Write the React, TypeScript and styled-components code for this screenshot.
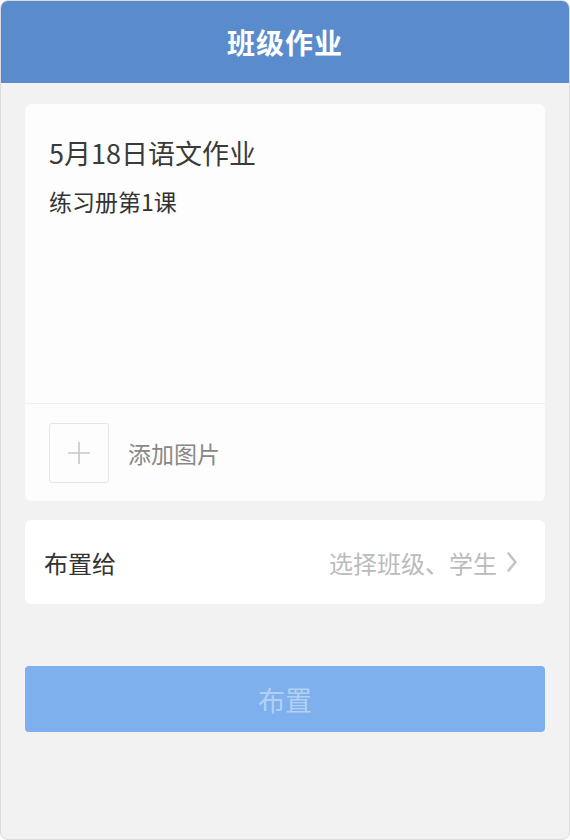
import styled, { createGlobalStyle } from "styled-components";

const GlobalStyle = createGlobalStyle`
  html, body {
    margin: 0;
    padding: 0;
    background: #ffffff;
  }
  * {
    box-sizing: border-box;
  }
  body {
    font-family: "Noto Sans CJK SC", "Noto Sans", sans-serif;
  }
`;

const Frame = styled.div`
  width: 570px;
  height: 840px;
  border: 1px solid #dcdcdc;
  border-radius: 8px;
  overflow: hidden;
  background: #f2f2f2;
  display: flex;
  flex-direction: column;
`;

const Header = styled.header`
  height: 82px;
  flex-shrink: 0;
  background: #5a8ccd;
  display: flex;
  align-items: center;
  justify-content: center;
  color: #ffffff;
  font-size: 28px;
  font-weight: 700;
  letter-spacing: 1px;
`;

const Body = styled.main`
  padding: 21px 24px 0;
  display: flex;
  flex-direction: column;
`;

const Card = styled.section`
  background: #fdfdfd;
  border-radius: 6px;
  display: flex;
  flex-direction: column;
`;

const TextArea = styled.div`
  height: 300px;
  padding: 31px 24px 0;
  display: flex;
  flex-direction: column;
  gap: 15px;
  border-bottom: 1px solid #efefef;
`;

const Title = styled.div`
  font-size: 27px;
  line-height: 36px;
  color: #3a3a3a;
`;

const Content = styled.div`
  font-size: 23px;
  line-height: 30px;
  color: #333333;
`;

const Attach = styled.div`
  height: 97px;
  padding: 0 24px;
  display: flex;
  align-items: center;
  gap: 19px;
`;

const AddBox = styled.div`
  width: 60px;
  height: 60px;
  border: 1px solid #e6e6e6;
  border-radius: 3px;
  display: flex;
  align-items: center;
  justify-content: center;
`;

const AttachLabel = styled.span`
  font-size: 23px;
  color: #888888;
`;

const Row = styled.div`
  margin-top: 19px;
  height: 84px;
  flex-shrink: 0;
  background: #ffffff;
  border-radius: 6px;
  padding: 0 27px 0 19px;
  display: flex;
  align-items: center;
  justify-content: space-between;
`;

const RowLabel = styled.span`
  font-size: 24px;
  color: #333333;
`;

const RowValue = styled.span`
  display: flex;
  align-items: center;
  gap: 9px;
  font-size: 24px;
  color: #bbbbbb;
`;

const SubmitButton = styled.button`
  margin-top: 62px;
  height: 66px;
  flex-shrink: 0;
  border: none;
  border-radius: 4px;
  background: #7eb0ed;
  color: #b3d0f3;
  font-family: "Noto Sans CJK SC", "Noto Sans", sans-serif;
  font-size: 27px;
  cursor: pointer;
`;

export default function App() {
  return (
    <>
      <GlobalStyle />
      <Frame>
        <Header>班级作业</Header>
        <Body>
          <Card>
            <TextArea>
              <Title>5月18日语文作业</Title>
              <Content>练习册第1课</Content>
            </TextArea>
            <Attach>
              <AddBox>
                <svg width="24" height="24" viewBox="0 0 24 24">
                  <path d="M12 1v22M1 12h22" stroke="#c8c8cc" strokeWidth="1.6" fill="none" />
                </svg>
              </AddBox>
              <AttachLabel>添加图片</AttachLabel>
            </Attach>
          </Card>
          <Row>
            <RowLabel>布置给</RowLabel>
            <RowValue>
              选择班级、学生
              <svg width="12" height="22" viewBox="0 0 12 22">
                <path d="M2.5 2.5l7 8.5-7 8.5" stroke="#c4c4c4" strokeWidth="2.6" fill="none" strokeLinecap="round" strokeLinejoin="round" />
              </svg>
            </RowValue>
          </Row>
          <SubmitButton>布置</SubmitButton>
        </Body>
      </Frame>
    </>
  );
}
